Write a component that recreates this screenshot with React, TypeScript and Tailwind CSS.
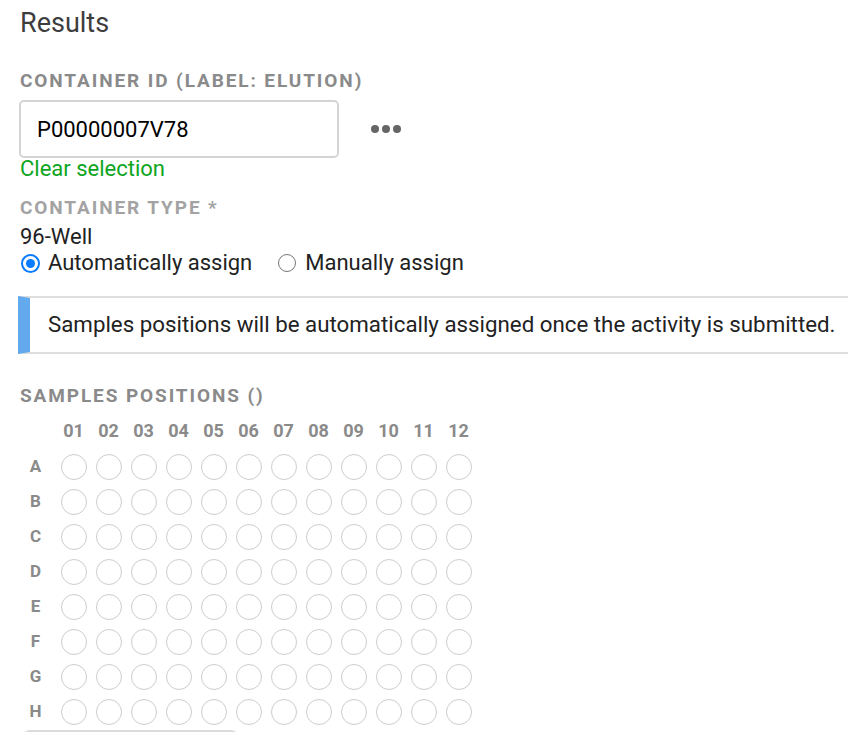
import React from "react";

const cols = ["01", "02", "03", "04", "05", "06", "07", "08", "09", "10", "11", "12"];
const rows = ["A", "B", "C", "D", "E", "F", "G", "H"];

const App = () => {
  return (
    <div
      className="w-[848px] h-[732px] overflow-hidden bg-white text-[#222]"
      style={{ fontFamily: "Roboto, 'Liberation Sans', sans-serif" }}
    >
      <div className="pl-5 pt-[6px]">
        <h2 className="text-[27px] leading-[34px] text-[#3d3d3d]">Results</h2>

        {/* Container ID */}
        <div className="mt-[30px] text-[19px] leading-[22px] font-bold tracking-[1.9px] text-[#8a8a8a] uppercase">
          Container ID (Label: Elution)
        </div>
        <div className="flex items-center mt-[8px]">
          <div className="w-[320px] h-[58px] -ml-px border-2 border-[#d4d4d4] rounded-[5px] flex items-center pl-[16px] text-[22px] text-black">
            P00000007V78
          </div>
          <div className="flex gap-[3px] ml-[32px]">
            <span className="w-[8px] h-[8px] rounded-full bg-[#666]" />
            <span className="w-[8px] h-[8px] rounded-full bg-[#666]" />
            <span className="w-[8px] h-[8px] rounded-full bg-[#666]" />
          </div>
        </div>
        <div className="text-[22px] leading-[24px] text-[#0ea51e] -mt-[1px]">Clear selection</div>

        {/* Container type */}
        <div className="mt-[16px] text-[19px] leading-[22px] font-bold tracking-[1.9px] text-[#a3a3a3] uppercase">
          Container type *
        </div>
        <div className="text-[22px] leading-[26px] mt-[5px]">96-Well</div>
        <div className="flex items-center text-[22px] leading-[26px]">
          <span className="w-[19px] h-[19px] rounded-full border-2 border-[#0b7bff] bg-white ml-[1px] mr-[8px] flex items-center justify-center">
            <span className="w-[9px] h-[9px] rounded-full bg-[#0b7bff]" />
          </span>
          <span>Automatically assign</span>
          <span className="w-[18px] h-[18px] rounded-full border border-[#777] bg-white ml-[26px] mr-[9px]" />
          <span>Manually assign</span>
        </div>

        {/* Info callout */}
        <div className="mt-[20px] -ml-[2px] h-[58px] border-y-2 border-[#dedede] border-l-[12px] border-l-[#63a9ee] flex items-center pl-[18px] text-[22.3px] text-[#222] whitespace-nowrap">
          Samples positions will be automatically assigned once the activity is submitted.
        </div>

        {/* Samples positions */}
        <div className="mt-[31px] text-[19px] leading-[22px] font-bold tracking-[1.9px] text-[#8a8a8a] uppercase">
          Samples positions ()
        </div>
        <div className="mt-[8px]">
          <div className="flex h-[31px] items-center">
            <div className="w-[36px]" />
            {cols.map((c) => (
              <div key={c} className="w-[35px] text-center text-[18px] font-bold text-[#8a8a8a]">
                {c}
              </div>
            ))}
          </div>
          <div className="pt-[3px]">
            {rows.map((r) => (
              <div key={r} className="flex h-[35px] items-center">
                <div className="w-[36px] pr-[5px] text-center text-[17px] font-bold text-[#8a8a8a]">{r}</div>
                {cols.map((c) => (
                  <div key={c} className="w-[35px] flex justify-center">
                    <span className="w-[26px] h-[26px] rounded-full border-[1.5px] border-[#cdcdcd]" />
                  </div>
                ))}
              </div>
            ))}
          </div>
          <div className="ml-[2px] mt-[1px] w-[217px] h-[10px] rounded-t-[8px] border-t-2 border-x-2 border-[#dcdcdc]" />
        </div>
      </div>
    </div>
  );
};

export default App;
